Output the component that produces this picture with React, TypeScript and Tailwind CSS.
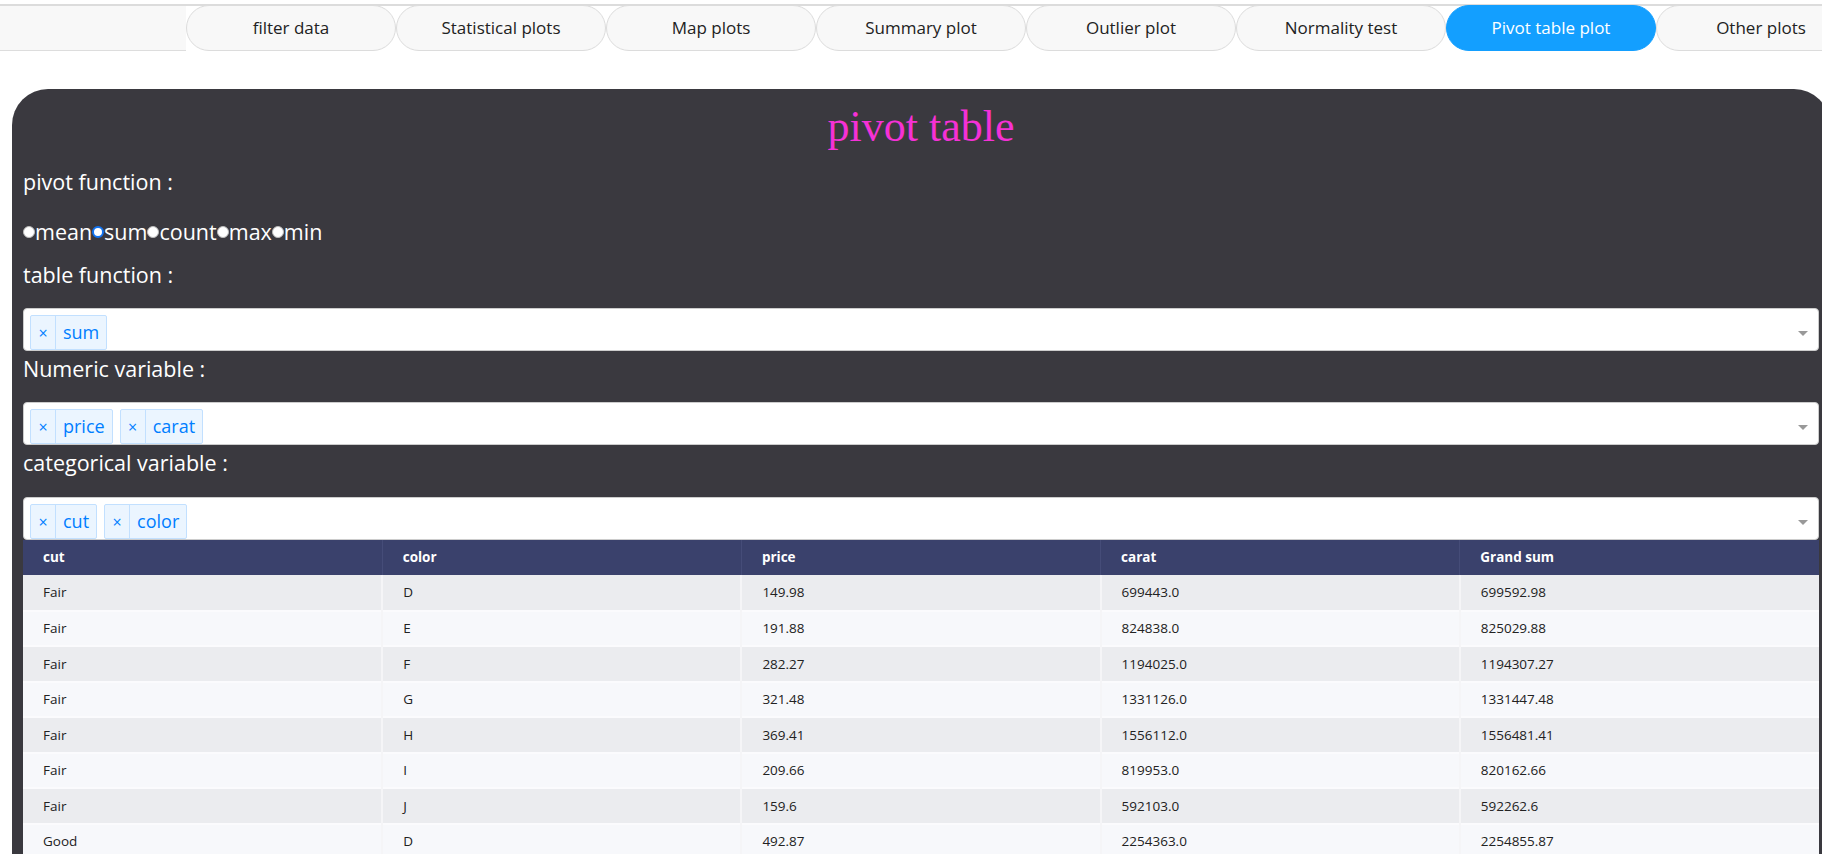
const tabs = [
  'filter data',
  'Statistical plots',
  'Map plots',
  'Summary plot',
  'Outlier plot',
  'Normality test',
  'Pivot table plot',
  'Other plots',
];

const funcs = ['mean', 'sum', 'count', 'max', 'min'];

const rows = [
  ['Fair', 'D', '149.98', '699443.0', '699592.98'],
  ['Fair', 'E', '191.88', '824838.0', '825029.88'],
  ['Fair', 'F', '282.27', '1194025.0', '1194307.27'],
  ['Fair', 'G', '321.48', '1331126.0', '1331447.48'],
  ['Fair', 'H', '369.41', '1556112.0', '1556481.41'],
  ['Fair', 'I', '209.66', '819953.0', '820162.66'],
  ['Fair', 'J', '159.6', '592103.0', '592262.6'],
  ['Good', 'D', '492.87', '2254363.0', '2254855.87'],
];

function Chip({ label }: { label: string }) {
  return (
    <div className="flex h-[35px] items-stretch rounded-[2px] border border-[#c2e0ff] bg-[#ebf5ff] text-[18px] text-[#007eff]">
      <span className="flex w-[25px] items-center justify-center border-r border-[#c2e0ff] text-[16px]">×</span>
      <span className="flex items-center px-[7px]">{label}</span>
    </div>
  );
}

function MultiSelect({ values }: { values: string[] }) {
  return (
    <div className="flex h-[43px] items-end justify-between rounded-[4px] border border-[#ccc] bg-white pl-[6px] pr-[10px]">
      <div className="flex gap-[7px]">
        {values.map((v) => (
          <Chip key={v} label={v} />
        ))}
      </div>
      <div className="mb-[14px] h-0 w-0 border-x-[5px] border-t-[5px] border-x-transparent border-t-[#999]" />
    </div>
  );
}

export default function App() {
  return (
    <div className="h-[854px] w-[1822px] overflow-hidden bg-white font-['Open_Sans',sans-serif]">
      <div className="h-[4px]" />
      <div className="h-[2px] bg-[#dcdcdc]" />
      <div className="flex h-[45px]">
        <div className="w-[186px] shrink-0 border-b border-[#ddd] bg-[#f8f8f8]" />
        {tabs.map((t) => (
          <div
            key={t}
            className={
              t === 'Pivot table plot'
                ? 'flex h-[46px] w-[210px] shrink-0 -translate-y-[1px] items-center justify-center rounded-full border border-[#139fff] bg-[#139fff] text-[17px] text-white'
                : 'flex h-[46px] w-[210px] shrink-0 -translate-y-[1px] items-center justify-center rounded-full border border-[#dcdcdc] bg-[#f8f8f8] text-[17px] text-[#222]'
            }
          >
            {t}
          </div>
        ))}
      </div>

      <div className="ml-[12px] mt-[38px] h-[800px] w-[1818px] rounded-t-[36px] bg-[#3a393f] px-[11px] pt-[13px]">
        <h1 className="text-center font-['Liberation_Serif',serif] text-[44px] leading-[50px] text-[#f531d6]">
          pivot table
        </h1>

        <p className="mt-[18px] text-[21.5px] leading-[24px] text-white">pivot function :</p>
        <div className="mt-[26px] flex items-center text-[21.5px] leading-[24px] text-white">
          {funcs.map((f) => (
            <label key={f} className="flex items-center">
              {f === 'sum' ? (
                <span className="h-[12px] w-[12px] rounded-full border-[2px] border-[#1273f0] bg-white" />
              ) : (
                <span className="h-[12px] w-[12px] rounded-full border border-[#bbb] bg-white" />
              )}
              <span>{f}</span>
            </label>
          ))}
        </div>

        <p className="mt-[19px] text-[21.5px] leading-[24px] text-white">table function :</p>
        <div className="mt-[21px]">
          <MultiSelect values={['sum']} />
        </div>

        <p className="mt-[6px] text-[21.5px] leading-[24px] text-white">Numeric variable :</p>
        <div className="mt-[21px]">
          <MultiSelect values={['price', 'carat']} />
        </div>

        <p className="mt-[6px] text-[21.5px] leading-[24px] text-white">categorical variable :</p>
        <div className="mt-[22px]">
          <MultiSelect values={['cut', 'color']} />
        </div>

        <table className="w-full table-fixed border-collapse text-[13.5px]">
          <thead>
            <tr className="h-[35px] bg-[#3a416c] text-left font-bold text-white">
              {['cut', 'color', 'price', 'carat', 'Grand sum'].map((h) => (
                <th key={h} className="border-x border-[#454c78] px-[20px] font-bold first:border-l-0 last:border-r-0">
                  {h}
                </th>
              ))}
            </tr>
          </thead>
          <tbody>
            {rows.map((r, i) => (
              <tr
                key={i}
                className={
                  i % 2 === 0
                    ? 'h-[35.5px] border-b-2 border-[#fbfbfd] bg-[#ebecef] text-[#222]'
                    : 'h-[35.5px] border-b-2 border-[#fbfbfd] bg-[#f7f8fb] text-[#222]'
                }
              >
                {r.map((c, j) => (
                  <td key={j} className="border-x-2 border-[#f5f5f7] px-[20px] first:border-l-0 last:border-r-0">
                    {c}
                  </td>
                ))}
              </tr>
            ))}
          </tbody>
        </table>
      </div>
    </div>
  );
}
